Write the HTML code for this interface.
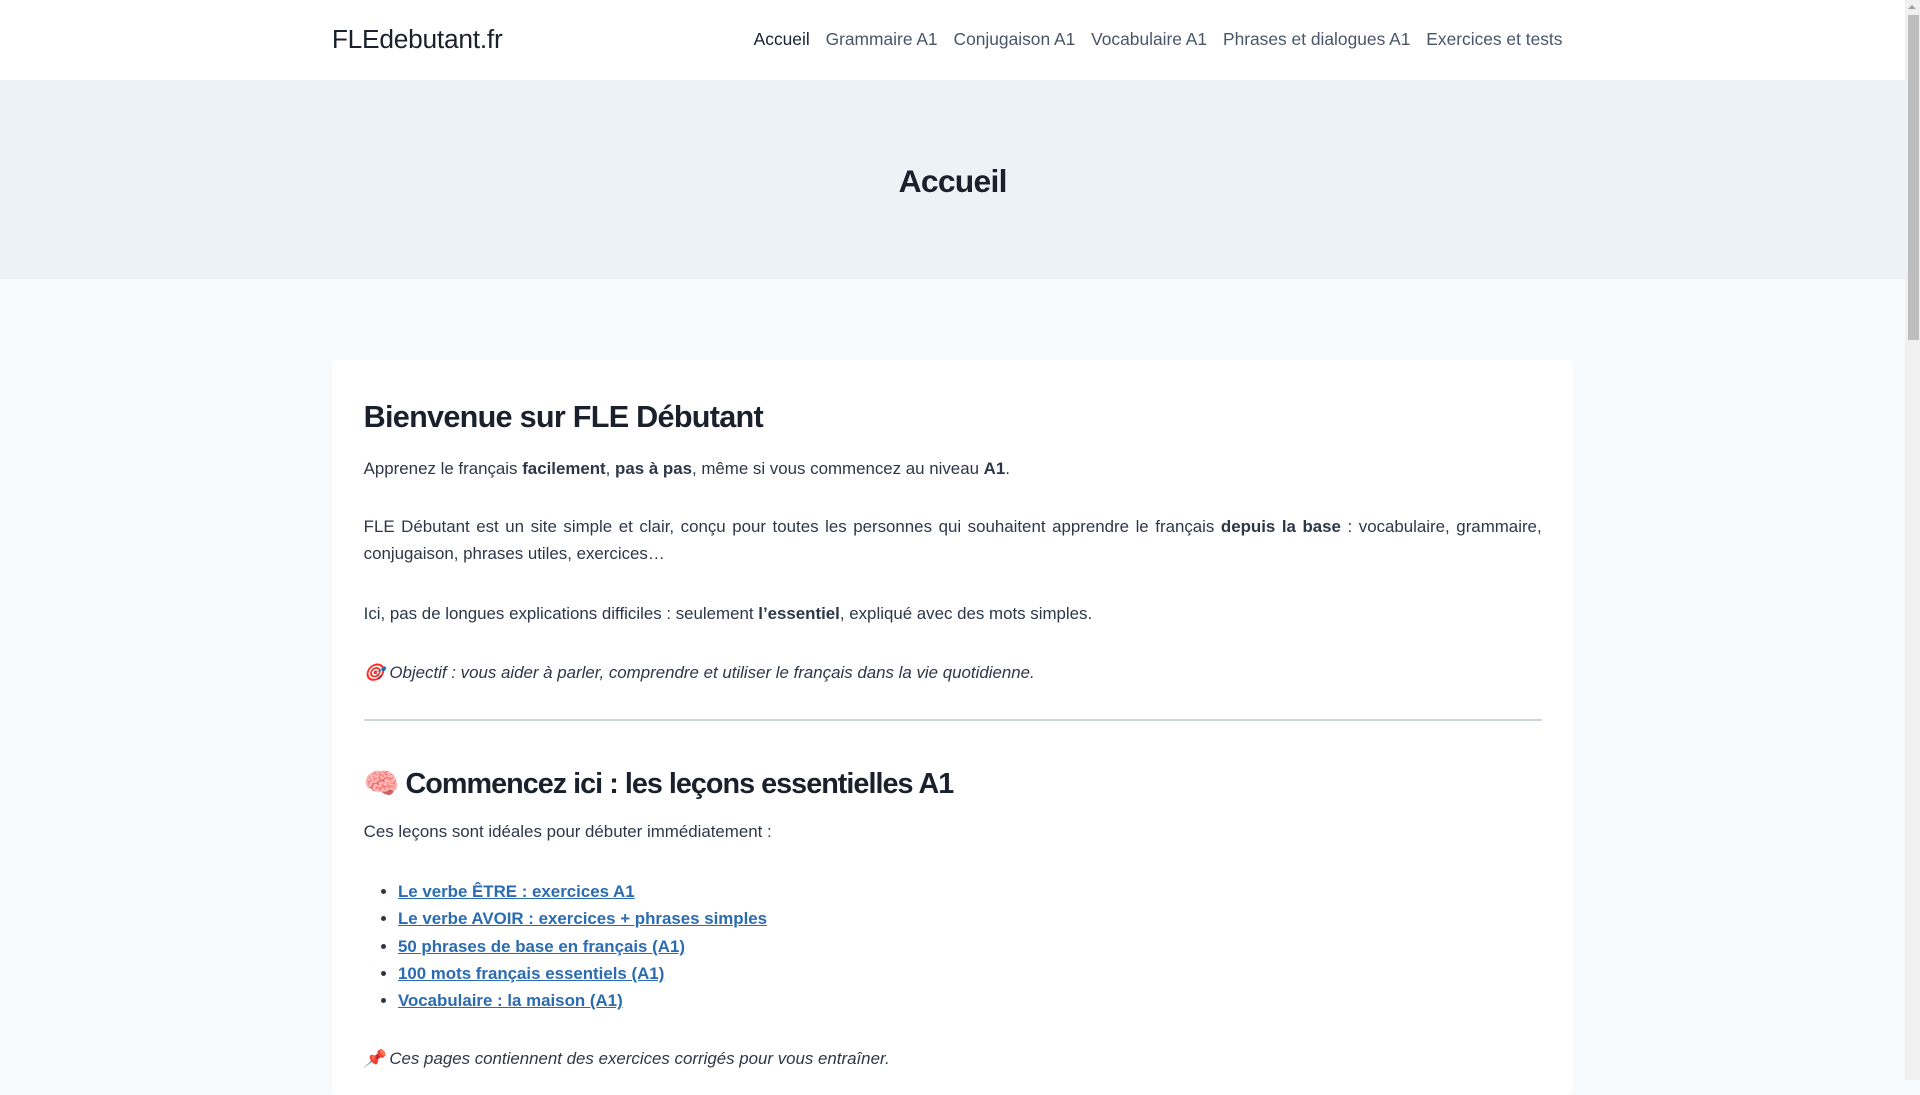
<!DOCTYPE html>
<html><head><meta charset="utf-8">
<style>
html,body{margin:0;padding:0;}
body{zoom:1.22449;width:1568px;height:882px;overflow:hidden;background:#f7fafc;font-family:"Liberation Sans","Noto Sans CJK JP",sans-serif;color:#2d3748;position:relative;}
.header{height:65px;background:#fff;position:relative;width:1556px;}
.logo{position:absolute;left:271px;top:20px;font-size:21.5px;color:#1a202c;letter-spacing:-0.2px;}
.nav{position:absolute;right:280px;top:24px;font-size:14.2px;color:#4a5568;white-space:nowrap;}
.nav span{margin-left:13px;}
.nav span.a{color:#1a202c;}
.hero{height:163px;background:#edf2f7;width:1556px;text-align:center;}
.hero h1{margin:0;padding-top:65px;font-size:26px;font-weight:bold;color:#1a202c;line-height:36px;letter-spacing:-0.6px;}
.card{position:absolute;left:271px;top:294px;width:1014px;height:600px;background:#fff;border-radius:4px;}
.in{padding:0 26px;font-size:13.8px;line-height:22px;}
h2{font-size:25px;margin:0;position:absolute;top:31px;line-height:32px;color:#1a202c;letter-spacing:-0.6px;}
p{margin:0;position:absolute;left:26px;right:26px;}
.j{text-align:justify;}
hr{position:absolute;left:26px;right:26px;top:293px;margin:0;border:0;border-top:2px solid #cbd5e0;}
ul{position:absolute;top:423px;left:26px;margin:0;padding-left:28px;}
ul li{line-height:22.3px;}
ul a{color:#2b6cb0;font-weight:bold;text-decoration:underline;}
.sb{position:absolute;left:1556px;top:0;width:12px;height:882px;background:#f0f0f0;}
.th{position:absolute;left:1558px;top:12px;width:9px;height:266px;background:#bdbdbd;}
.ar{position:absolute;left:1558px;top:4px;width:0;height:0;border-left:4px solid transparent;border-right:4px solid transparent;border-bottom:4px solid #a0a0a0;}
</style></head><body>
<div class="header"><div class="logo">FLEdebutant.fr</div>
<div class="nav"><span class="a">Accueil</span><span>Grammaire A1</span><span>Conjugaison A1</span><span>Vocabulaire A1</span><span>Phrases et dialogues A1</span><span>Exercices et tests</span></div></div>
<div class="hero"><h1>Accueil</h1></div>
<div class="card"><div class="in">
<h2>Bienvenue sur FLE Débutant</h2>
<p style="top:78px">Apprenez le français <b>facilement</b>, <b>pas à pas</b>, même si vous commencez au niveau <b>A1</b>.</p>
<p class="j" style="top:126px">FLE Débutant est un site simple et clair, conçu pour toutes les personnes qui souhaitent apprendre le français <b>depuis la base</b> : vocabulaire, grammaire, conjugaison, phrases utiles, exercices…</p>
<p style="top:197px">Ici, pas de longues explications difficiles : seulement <b>l’essentiel</b>, expliqué avec des mots simples.</p>
<p style="top:245px"><i>🎯 Objectif : vous aider à parler, comprendre et utiliser le français dans la vie quotidienne.</i></p>
<hr>
<h2 style="top:331px;font-size:23.5px;letter-spacing:-0.8px">🧠 Commencez ici : les leçons essentielles A1</h2>
<p style="top:375px">Ces leçons sont idéales pour débuter immédiatement :</p>
<ul>
<li><a>Le verbe ÊTRE : exercices A1</a></li>
<li><a>Le verbe AVOIR : exercices + phrases simples</a></li>
<li><a>50 phrases de base en français (A1)</a></li>
<li><a>100 mots français essentiels (A1)</a></li>
<li><a>Vocabulaire : la maison (A1)</a></li>
</ul>
<p style="top:560px"><i>📌 Ces pages contiennent des exercices corrigés pour vous entraîner.</i></p>
</div></div>
<div class="sb"></div><div class="ar"></div><div class="th"></div>
</body></html>
